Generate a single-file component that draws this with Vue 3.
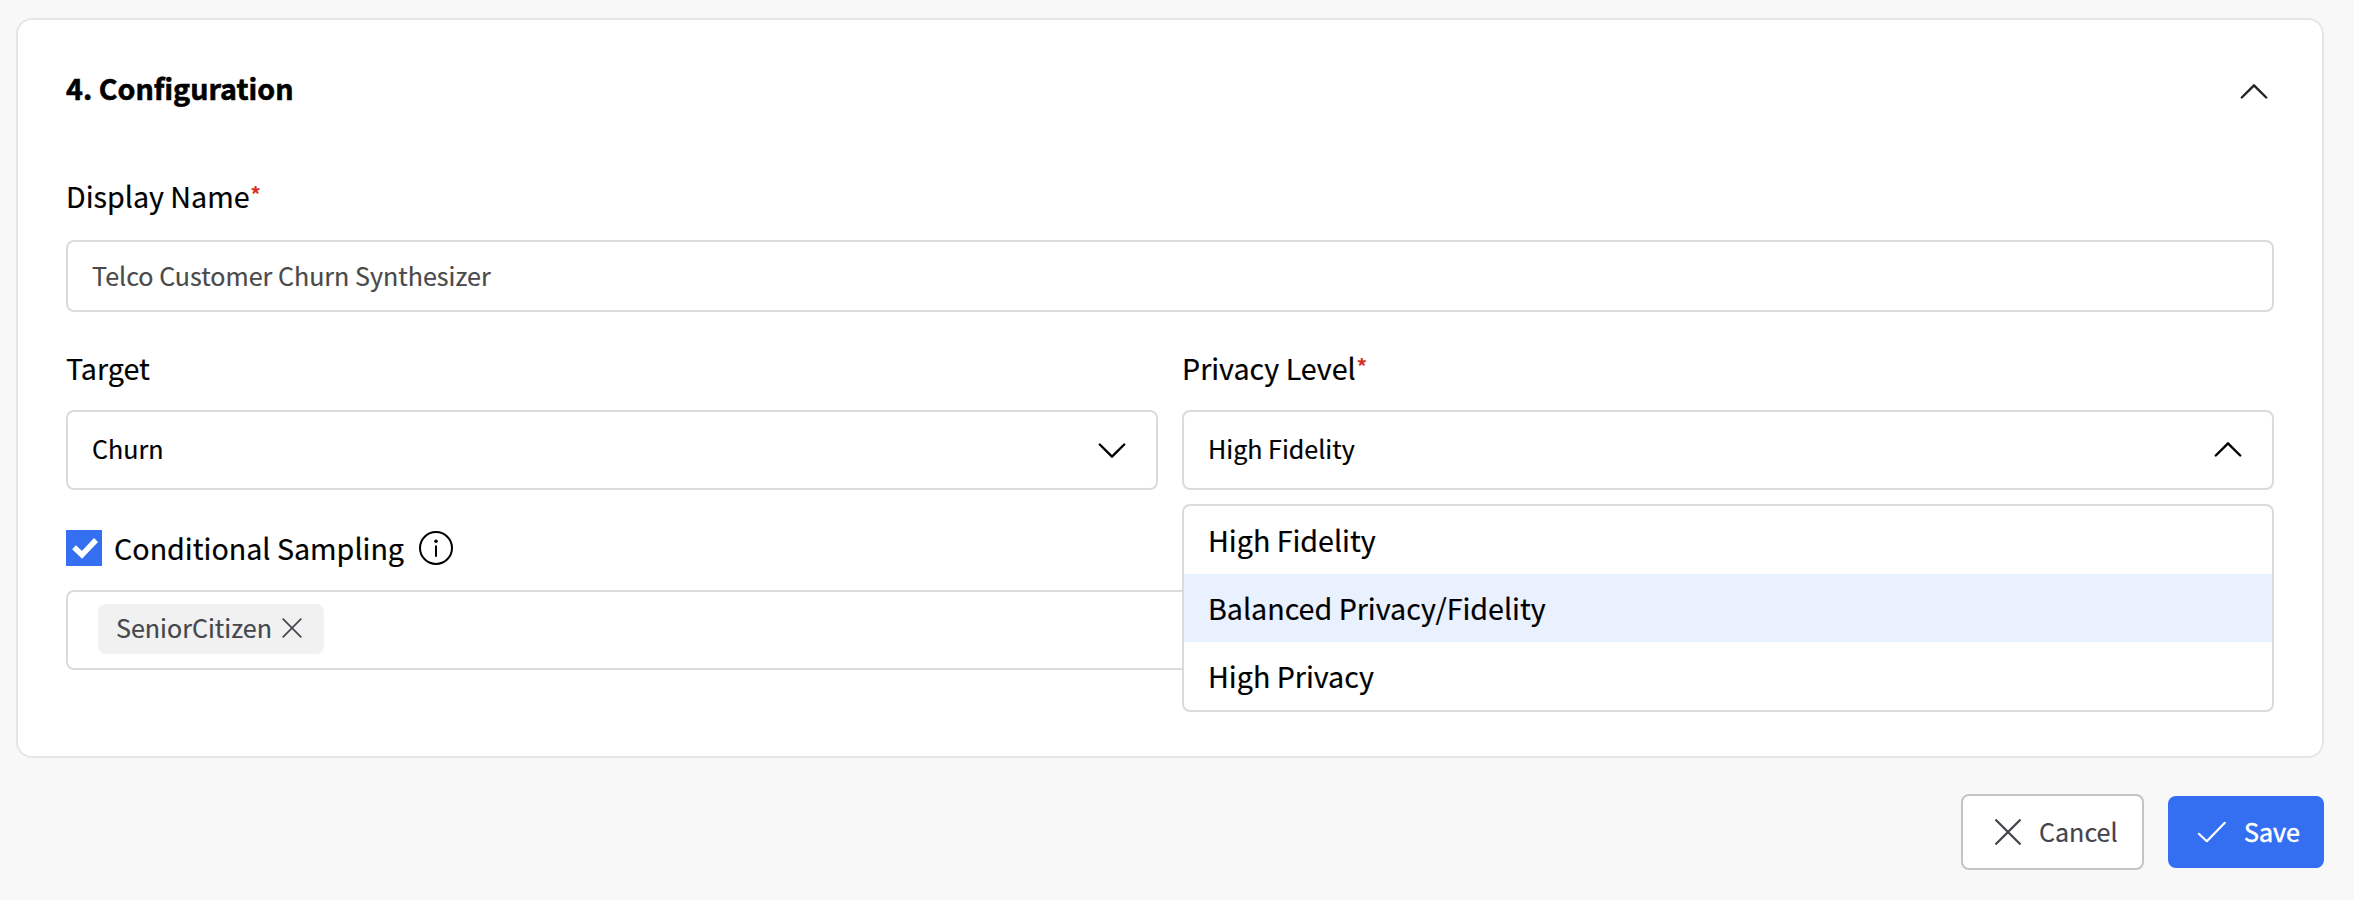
<script setup>
import { ref } from 'vue'

const name = ref('Telco Customer Churn Synthesizer')
const options = ['High Fidelity', 'Balanced Privacy/Fidelity', 'High Privacy']
const active = ref(1)
</script>

<template>
  <main class="page">
    <section class="card">
      <header class="head">
        <h2 class="title">4. Configuration</h2>
        <svg class="chev head-chev" viewBox="0 0 28 16"><path d="M1.8 14.5 14 2.3 26.2 14.5" /></svg>
      </header>

      <div class="label">Display Name<span class="req">*</span></div>
      <div class="control input"><span class="value muted">{{ name }}</span></div>

      <div class="row">
        <div class="col">
          <div class="label">Target</div>
          <div class="control select">
            <span class="value">Churn</span>
            <svg class="chev down" viewBox="0 0 28 16"><path d="M1.8 1.5 14 13.7 26.2 1.5" /></svg>
          </div>
        </div>
        <div class="col">
          <div class="label">Privacy Level<span class="req">*</span></div>
          <div class="control select">
            <span class="value">High Fidelity</span>
            <svg class="chev up" viewBox="0 0 28 16"><path d="M1.8 14.5 14 2.3 26.2 14.5" /></svg>
          </div>
          <ul class="menu">
            <li v-for="(o, i) in options" :key="o" class="option" :class="{ active: i === active }">
              <span>{{ o }}</span>
            </li>
          </ul>
        </div>
      </div>

      <div class="check-row">
        <span class="box">
          <svg viewBox="0 0 36 36"><path d="M8 17.2 16 24.8 30 10" /></svg>
        </span>
        <span class="check-text">Conditional Sampling</span>
        <svg class="info" viewBox="0 0 34 34">
          <circle class="ring" cx="17" cy="17" r="16" />
          <circle class="dot" cx="17" cy="10.3" r="1.8" />
          <path d="M17 15.3V25" />
        </svg>
      </div>
      <div class="control multi">
        <span class="tag">
          <span class="tag-text">SeniorCitizen</span>
          <svg class="tag-x" viewBox="0 0 20 20"><path d="M1.2 1.2 18.8 18.8M18.8 1.2 1.2 18.8" /></svg>
        </span>
      </div>
    </section>

    <footer class="actions">
      <button class="btn cancel">
        <svg class="ico-x" viewBox="0 0 26 26"><path d="M1.2 1.2 24.8 24.8M24.8 1.2 1.2 24.8" /></svg>
        <span>Cancel</span>
      </button>
      <button class="btn save">
        <svg class="ico-check" viewBox="0 0 30 22"><path d="M1.8 12.8 9.8 20.2 27.8 1.8" /></svg>
        <span>Save</span>
      </button>
    </footer>
  </main>
</template>

<style>
body {
  background: #f8f8f8;
}
</style>

<style scoped>
* {
  box-sizing: border-box;
}
.page {
  height: 900px;
  padding: 18px 30px 0 16px;
  background: #f8f8f8;
  font-family: 'Noto Sans CJK SC', 'Noto Sans CJK JP', sans-serif;
  font-size: 28.65px;
  color: #000;
  -webkit-text-stroke: 0.2px currentColor;
  overflow: hidden;
}
.card {
  height: 740px;
  padding: 48px 48px 0;
  background: #fff;
  border: 2px solid #e6e6e6;
  border-radius: 16px;
}
.head {
  display: flex;
  justify-content: space-between;
  height: 108px;
}
.title {
  margin: 0;
  font-size: 28.65px;
  font-weight: 700;
  line-height: 40px;
  white-space: nowrap;
  -webkit-text-stroke-width: 0.6px;
}
svg {
  display: block;
  flex: none;
  fill: none;
  stroke: currentColor;
  stroke-linecap: round;
  stroke-linejoin: round;
}
.chev {
  width: 28px;
  height: 16px;
  stroke-width: 2.4;
}
.head-chev {
  margin: 15px 6px 0 0;
  color: #222;
}
.label {
  height: 64px;
  line-height: 40px;
  white-space: nowrap;
}
.row .label {
  padding-top: 2px;
}
.req {
  display: inline-block;
  margin-left: 1px;
  font-size: 20px;
  font-weight: 700;
  line-height: 20px;
  color: #d93025;
  transform: translateY(-6px);
}
.control {
  display: flex;
  align-items: center;
  border: 2px solid #dbdbdb;
  border-radius: 8px;
  background: #fff;
  padding: 0 0 0 24px;
}
.input {
  height: 72px;
  padding-bottom: 2px;
}
.select {
  height: 80px;
  justify-content: space-between;
  padding-right: 30px;
}
.select .value {
  margin-bottom: 5px;
}
.select .down {
  margin-top: 2px;
}
.select .up {
  margin-bottom: 2px;
}
.value {
  font-size: 25.07px;
  line-height: 40px;
  white-space: nowrap;
}
.muted {
  color: #4a4a4a;
}
.row {
  display: grid;
  grid-template-columns: 1fr 1fr;
  gap: 24px;
  margin-top: 34px;
}
.col {
  position: relative;
}
.menu {
  position: absolute;
  z-index: 2;
  top: 158px;
  left: 0;
  right: 0;
  margin: 0;
  padding: 0;
  list-style: none;
  background: #fff;
  border: 2px solid #dbdbdb;
  border-radius: 8px;
}
.option {
  height: 68px;
  padding-left: 24px;
  line-height: 67px;
  white-space: nowrap;
}
.active {
  background: #e9f0fe;
}
.check-row {
  display: flex;
  align-items: center;
  height: 36px;
  margin: 40px 0 24px;
}
.box {
  width: 36px;
  height: 36px;
  background: #346ef1;
  color: #fff;
}
.box svg {
  stroke-width: 5.5;
  stroke-linecap: butt;
  stroke-linejoin: miter;
}
.check-text {
  width: 305px;
  margin-left: 12px;
  line-height: 36px;
  white-space: nowrap;
}
.info {
  width: 34px;
  height: 34px;
  stroke-width: 2;
}
.info .dot {
  fill: currentColor;
  stroke: none;
}
.multi {
  height: 80px;
  align-items: flex-start;
  padding: 12px 0 0 30px;
}
.tag {
  display: flex;
  align-items: center;
  width: 226px;
  height: 50px;
  padding-left: 18px;
  border-radius: 8px;
  background: #f1f1f1;
  color: #45474c;
}
.tag-text {
  width: 166px;
  margin-bottom: 4px;
  font-size: 25.07px;
  line-height: 40px;
  white-space: nowrap;
}
.tag-x {
  width: 20px;
  height: 20px;
  margin-bottom: 2px;
  stroke-width: 1.7;
}
.actions {
  display: flex;
  justify-content: flex-end;
  align-items: center;
  gap: 24px;
  height: 76px;
  margin-top: 36px;
}
.btn {
  display: flex;
  align-items: center;
  padding: 0;
  border: 0;
  border-radius: 8px;
  font-family: inherit;
  font-size: 25.07px;
  line-height: 40px;
  white-space: nowrap;
}
.btn span {
  margin-bottom: 2px;
}
.cancel {
  width: 183px;
  height: 76px;
  padding-left: 32px;
  border: 2px solid #c4c4c4;
  background: #fff;
  color: #43454b;
}
.ico-x {
  width: 26px;
  height: 26px;
  margin-right: 18px;
  stroke-width: 2.3;
}
.save {
  width: 156px;
  height: 72px;
  padding-left: 29px;
  background: #346ef1;
  color: #fff;
  -webkit-text-stroke-width: 0.5px;
}
.ico-check {
  width: 30px;
  height: 22px;
  margin-right: 17px;
  stroke-width: 2.2;
}
</style>
